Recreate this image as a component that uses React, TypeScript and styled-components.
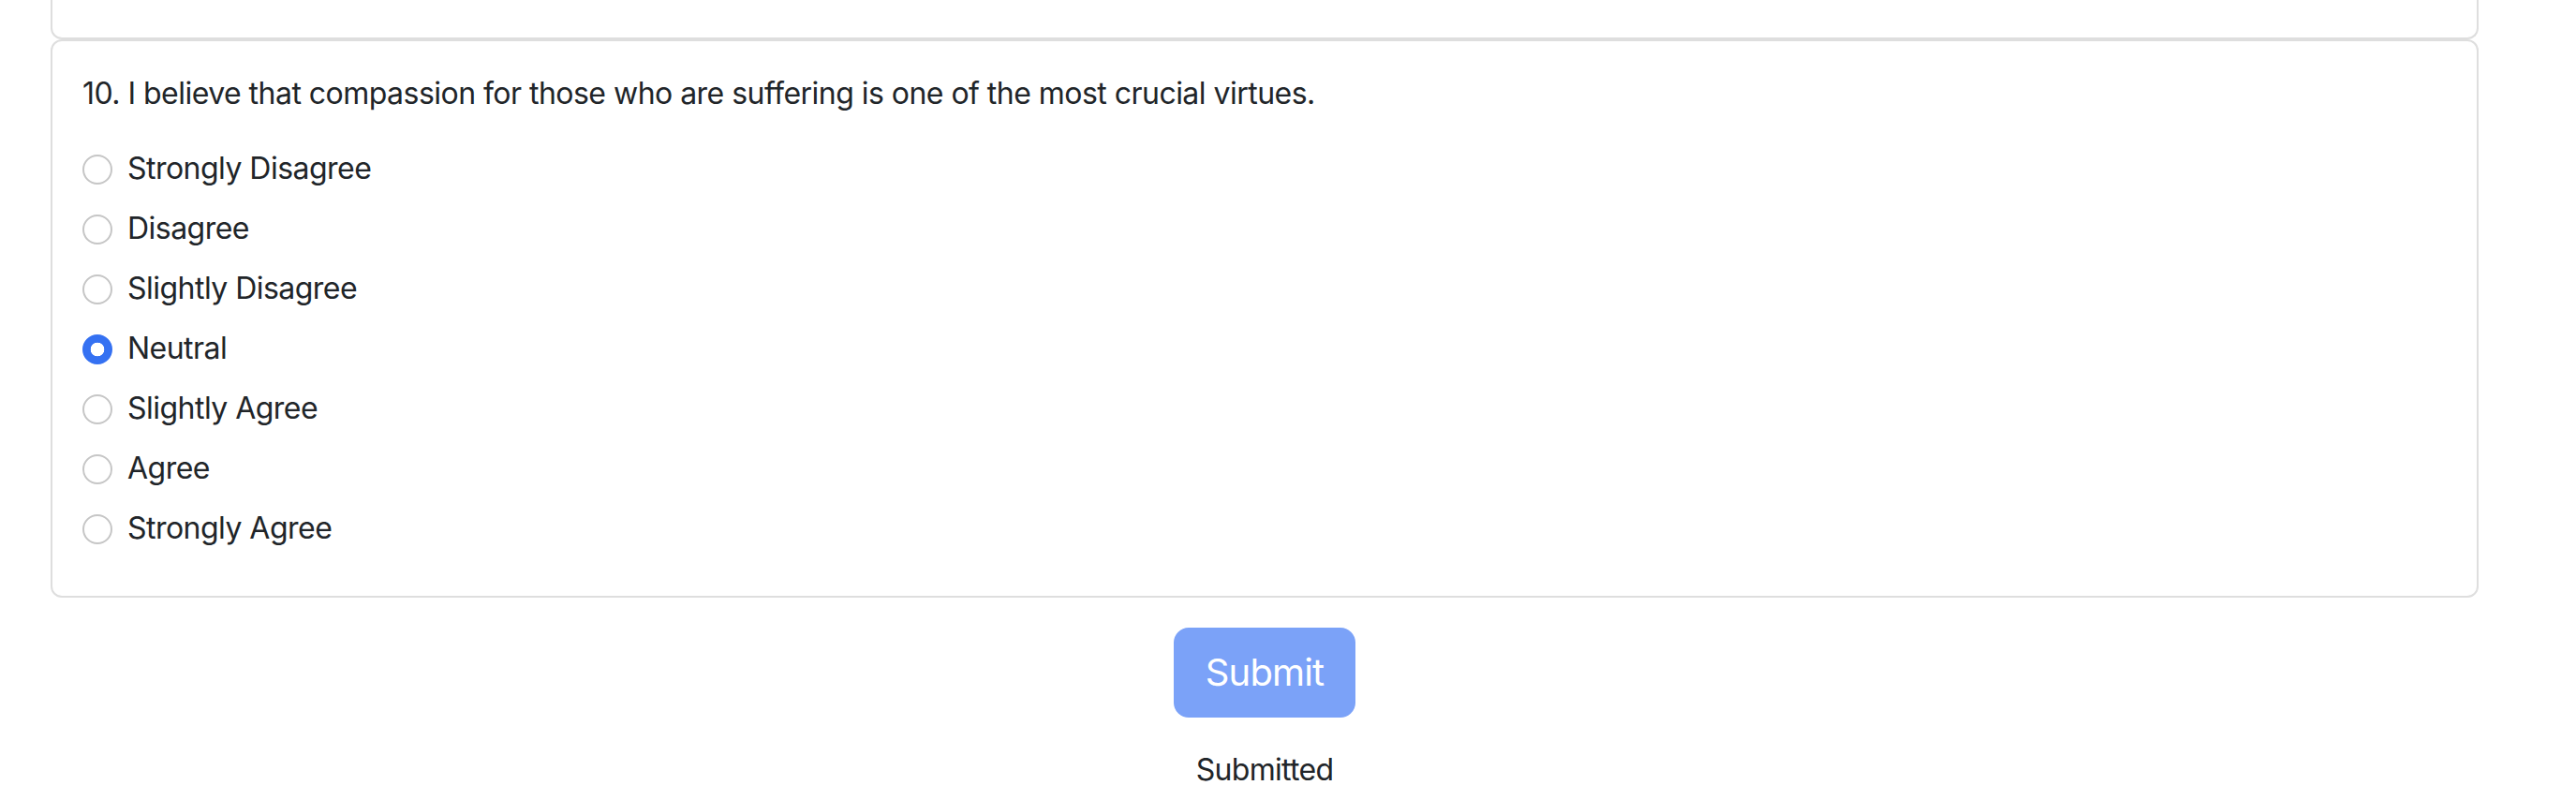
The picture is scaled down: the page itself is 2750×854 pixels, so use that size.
import React, { useState } from "react";
import styled, { createGlobalStyle } from "styled-components";

const GlobalStyle = createGlobalStyle`
  html, body {
    margin: 0;
    padding: 0;
    background: #ffffff;
  }
  body {
    font-family: Inter, "Noto Sans", "Liberation Sans", sans-serif;
    color: #212529;
    letter-spacing: -0.033em;
    -webkit-font-smoothing: antialiased;
  }
  *, *::before, *::after { box-sizing: border-box; }
`;

const Page = styled.div`
  display: flex;
  flex-direction: column;
  padding: 0 104px 0 54px;
`;

const PrevCard = styled.div`
  height: 42px;
  border: 2px solid #dedede;
  border-top: none;
  border-radius: 0 0 12px 12px;
`;

const Card = styled.fieldset`
  margin: 0;
  min-width: 0;
  border: 2px solid #dedede;
  border-radius: 12px;
  padding: 32px;
  display: flex;
  flex-direction: column;
`;

const Question = styled.legend`
  float: left;
  width: 100%;
  padding: 0;
  margin: 0 0 32px;
  font-size: 32px;
  line-height: 48px;
  font-weight: 400;
`;

const Options = styled.div`
  clear: both;
  display: flex;
  flex-direction: column;
`;

const OptionRow = styled.label`
  display: flex;
  align-items: flex-start;
  gap: 16px;
  min-height: 48px;
  margin-bottom: 16px;
  font-size: 32px;
  line-height: 48px;
  cursor: pointer;
`;

const Radio = styled.input.attrs({ type: "radio" })`
  appearance: none;
  -webkit-appearance: none;
  flex: none;
  width: 32px;
  height: 32px;
  margin: 9px 0 0;
  border: 2px solid #c6c6c6;
  border-radius: 50%;
  background: #ffffff;

  &:checked {
    border-color: #3571f2;
    background: radial-gradient(circle, #ffffff 0 7px, #3571f2 7.6px);
  }
`;

const Footer = styled.div`
  display: flex;
  flex-direction: column;
  align-items: center;
`;

const SubmitButton = styled.button`
  margin-top: 32px;
  padding: 16px 32px;
  font-family: inherit;
  font-size: 40px;
  line-height: 60px;
  letter-spacing: -0.022em;
  color: #ffffff;
  background: #7ba2f8;
  border: 2px solid transparent;
  border-radius: 16px;
  cursor: default;
`;

const Status = styled.div`
  margin-top: 32px;
  font-size: 32px;
  line-height: 48px;
  letter-spacing: -0.022em;
`;

const OPTIONS = [
  "Strongly Disagree",
  "Disagree",
  "Slightly Disagree",
  "Neutral",
  "Slightly Agree",
  "Agree",
  "Strongly Agree",
];

export default function App() {
  const [value, setValue] = useState("Neutral");
  return (
    <>
      <GlobalStyle />
      <Page>
        <PrevCard />
        <Card>
          <Question>
            10. I believe that compassion for those who are suffering is one of the most crucial virtues.
          </Question>
          <Options>
            {OPTIONS.map((o) => (
              <OptionRow key={o}>
                <Radio
                  name="q10"
                  value={o}
                  checked={value === o}
                  onChange={() => setValue(o)}
                />
                {o}
              </OptionRow>
            ))}
          </Options>
        </Card>
        <Footer>
          <SubmitButton disabled>Submit</SubmitButton>
          <Status>Submitted</Status>
        </Footer>
      </Page>
    </>
  );
}
